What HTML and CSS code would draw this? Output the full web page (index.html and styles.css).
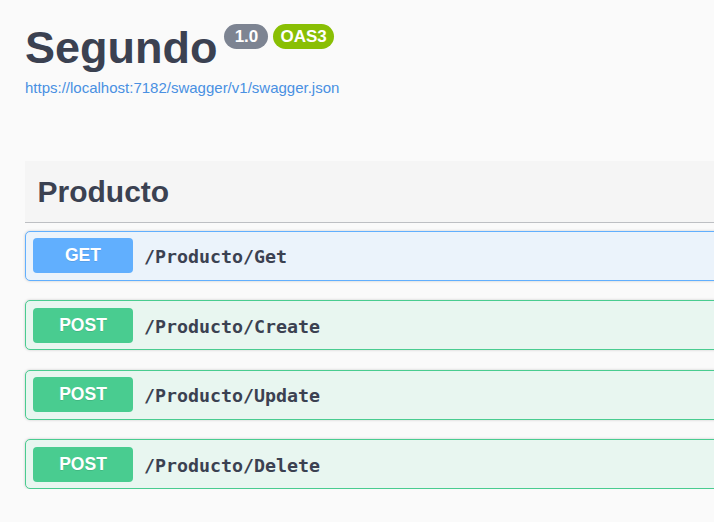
FILE: index.html
```html
<!DOCTYPE html>
<html>
<head>
<meta charset="utf-8">
<title>Segundo</title>
<link rel="stylesheet" href="styles.css">
</head>
<body>
<div class="page">
  <div class="info">
    <div class="title-row">
      <h2 class="title">Segundo</h2>
      <span class="badge badge-version">1.0</span>
      <span class="badge badge-oas">OAS3</span>
    </div>
    <a class="spec-link" href="#">https://localhost:7182/swagger/v1/swagger.json</a>
  </div>

  <div class="tag-section">
    <h3 class="tag-header">Producto</h3>
    <div class="ops">
      <div class="opblock opblock-get">
        <span class="method method-get">GET</span>
        <span class="path">/Producto/Get</span>
      </div>
      <div class="opblock opblock-post">
        <span class="method method-post">POST</span>
        <span class="path">/Producto/Create</span>
      </div>
      <div class="opblock opblock-post">
        <span class="method method-post">POST</span>
        <span class="path">/Producto/Update</span>
      </div>
      <div class="opblock opblock-post">
        <span class="method method-post">POST</span>
        <span class="path">/Producto/Delete</span>
      </div>
    </div>
  </div>
</div>
</body>
</html>
```

FILE: styles.css
```css
html, body {
  margin: 0;
  padding: 0;
  background: #fafafa;
  overflow: hidden;
}

body {
  font-family: "Liberation Sans", Arial, sans-serif;
  color: #3b4151;
}

.page {
  width: 760px;
  padding: 22px 0 0 25px;
}

.title-row {
  display: flex;
  align-items: flex-start;
}

.title {
  margin: 0;
  font-size: 45px;
  line-height: 52px;
  font-weight: bold;
  color: #3b4151;
}

.badge {
  display: inline-block;
  margin-top: 2px;
  height: 25px;
  line-height: 25px;
  padding: 0 7px;
  min-width: 30px;
  text-align: center;
  border-radius: 70px;
  color: #fff;
  font-size: 17px;
  font-weight: bold;
}

.badge-version {
  margin-left: 7px;
  background: #7d8492;
}

.badge-oas {
  margin-left: 5px;
  background: #89bf04;
}

.spec-link {
  display: block;
  margin-top: 5px;
  font-size: 15px;
  line-height: 18px;
  color: #4990e2;
  text-decoration: none;
}

.tag-section {
  margin-top: 64px;
}

.tag-header {
  margin: 0;
  padding: 12.5px 25px 12.5px 12.5px;
  font-size: 30px;
  line-height: 36px;
  font-weight: bold;
  background: #f5f5f5;
  border-bottom: 1px solid rgba(59, 65, 81, 0.3);
}

.ops {
  display: flex;
  flex-direction: column;
  gap: 19.5px;
  margin-top: 7.5px;
}

.opblock {
  display: flex;
  align-items: center;
  padding: 6.5px 7px;
  border: 1px solid;
  border-radius: 5px;
  box-shadow: 0 0 3px rgba(0, 0, 0, 0.19);
}

.opblock-get {
  border-color: #61affe;
  background: #ebf3fb;
}

.opblock-post {
  border-color: #49cc90;
  background: #e8f6f0;
}

.method {
  display: flex;
  align-items: center;
  justify-content: center;
  width: 100px;
  height: 35px;
  border-radius: 4px;
  color: #fff;
  font-size: 17.5px;
  font-weight: bold;
  text-shadow: 0 1px 0 rgba(0, 0, 0, 0.1);
}

.method-get {
  background: #61affe;
}

.method-post {
  background: #49cc90;
}

.path {
  padding: 2px 11px 0;
  font-family: "DejaVu Sans Mono", monospace;
  font-size: 18.3px;
  font-weight: bold;
  color: #3b4151;
}
```
